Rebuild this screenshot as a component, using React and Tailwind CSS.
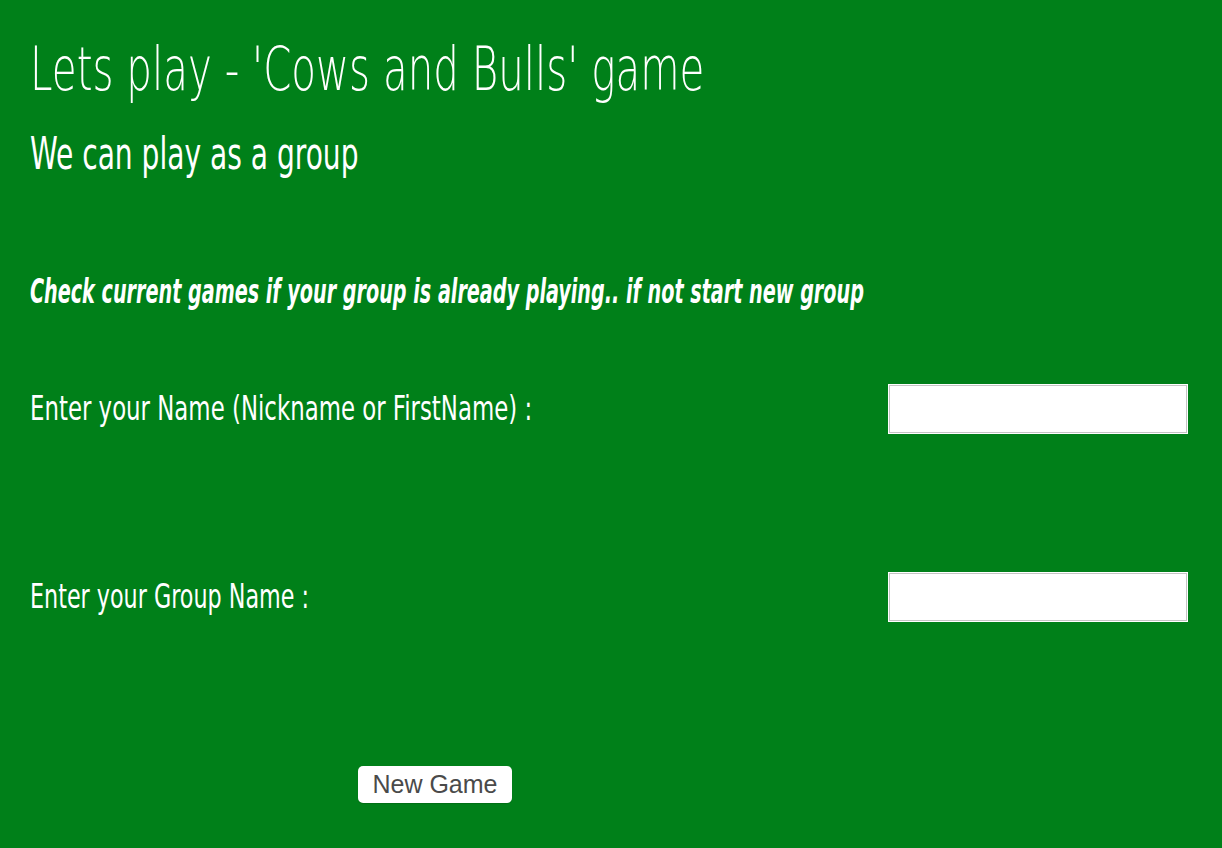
import React, { useState } from 'react'

const App = () => {
  const [form, setForm] = useState({ name: '', group: '' })

  const handleChange = (e) => {
    const { name, value } = e.target
    setForm((s) => ({ ...s, [name]: value }))
  }

  return (
    <div className="min-h-[848px] bg-[#008019] text-white px-[30px] pt-[32px] font-['DejaVu_Sans_Condensed','DejaVu_Sans',sans-serif]">
      <h1 className="text-[60px] leading-[74px] font-extralight font-['DejaVu_Sans',sans-serif] origin-left scale-x-[0.673] whitespace-nowrap">Lets play - 'Cows and Bulls' game</h1>
      <h2 className="mt-[21px] text-[44px] leading-[54px] origin-left scale-x-[0.71] whitespace-nowrap">We can play as a group</h2>

      <p className="mt-[90px] text-[33px] leading-[42px] font-bold italic origin-left scale-x-[0.646] whitespace-nowrap">
        Check current games if your group is already playing.. if not start new group
      </p>

      <div className="mt-[71px] w-[1158px]">
        <div className="flex items-center justify-between h-[50px]">
          <label className="text-[33px] origin-left scale-x-[0.77] whitespace-nowrap">Enter your Name (Nickname or FirstName) :</label>
          <input
            name="name"
            value={form.name}
            onChange={handleChange}
            className="w-[300px] h-[50px] bg-white border border-white shadow-[inset_0_0_0_1px_#c4c4c4] text-black px-2 focus:outline-none"
          />
        </div>

        <div className="flex items-center justify-between h-[50px] mt-[138px]">
          <label className="text-[33px] origin-left scale-x-[0.75] whitespace-nowrap">Enter your Group Name :</label>
          <input
            name="group"
            value={form.group}
            onChange={handleChange}
            className="w-[300px] h-[50px] bg-white border border-white shadow-[inset_0_0_0_1px_#c4c4c4] text-black px-2 focus:outline-none"
          />
        </div>

        <div className="mt-[144px] pl-[328px]">
          <button
            type="button"
            className="w-[154px] h-[37px] bg-white rounded-[5px] text-[#4a4a4a] text-[25px] leading-none font-['Liberation_Sans',sans-serif] shadow-[0_1px_1px_rgba(0,0,0,0.15)]"
          >
            New Game
          </button>
        </div>
      </div>
    </div>
  )
}

export default App
